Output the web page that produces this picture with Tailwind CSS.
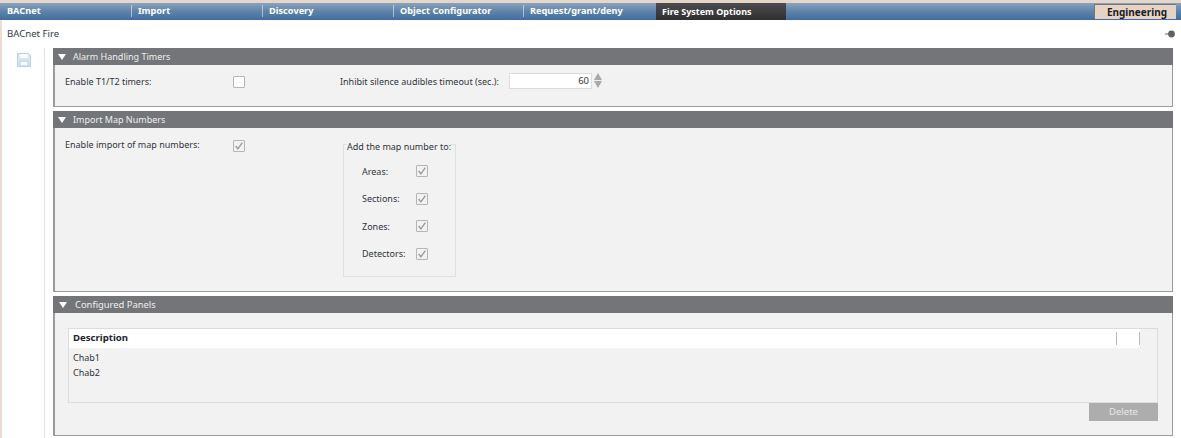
<!DOCTYPE html>
<html><head><meta charset="utf-8"><script src="https://cdn.jsdelivr.net/npm/@tailwindcss/browser@4"></script></head>
<body class="m-0 bg-white">
<div class="w-[1181px] h-[438px] overflow-hidden flex flex-col bg-white text-[9px] text-[#30353b] font-['Noto_Sans',sans-serif] leading-none">
  <div class="h-[3px] bg-[#e6d5c9] shrink-0"></div>
  <div class="h-[17px] shrink-0 flex bg-gradient-to-b from-[#88a3bf] via-[#5f83a8] to-[#3f6d9f] text-white font-bold text-[9.2px]">
    <div class="w-[132px] flex items-center justify-between pl-[7px] pb-[1px]"><span>BACnet</span><span class="w-[1px] h-[12px] bg-white/50"></span></div>
    <div class="w-[131px] flex items-center justify-between pl-[6px] pb-[1px]"><span>Import</span><span class="w-[1px] h-[12px] bg-white/50"></span></div>
    <div class="w-[131px] flex items-center justify-between pl-[6px] pb-[1px]"><span>Discovery</span><span class="w-[1px] h-[12px] bg-white/50"></span></div>
    <div class="w-[130px] flex items-center justify-between pl-[6px] pb-[1px]"><span>Object Configurator</span><span class="w-[1px] h-[12px] bg-white/50"></span></div>
    <div class="w-[132px] flex items-center pl-[6px] pb-[1px]">Request/grant/deny</div>
    <div class="w-[130px] flex items-center pl-[6px] pb-[1px] text-[9px] bg-gradient-to-b from-[#4d4d4f] to-[#2f2f31]">Fire System Options</div>
    <div class="flex-1"></div>
    <div class="w-[82px] mt-[1px] mb-[1px] mr-[5px] pl-[3px] flex items-center justify-center bg-[#e6d3c6] border-l border-t border-[#777] text-[#1c1c1c] text-[10px]">Engineering</div>
  </div>
  <div class="h-[28px] shrink-0 flex items-start justify-between pl-[5px] pr-[4px] pt-[9px] border-l-2 border-[#ecdcd2]">
    <span class="text-[#2f3a46] text-[9.6px]">BACnet Fire</span>
    <svg width="12" height="10" viewBox="0 0 12 10"><path d="M0 5h5" stroke="#666" stroke-width="1"/><circle cx="6.5" cy="5" r="3.4" fill="#5f6264"/></svg>
  </div>
  <div class="flex-1 flex min-h-0 border-l-2 border-[#ecdcd2]">
    <div class="w-[43px] shrink-0 border-r border-[#e4e4e4] pl-[15px] pt-[5px]">
      <svg width="14" height="14" viewBox="0 0 14 14" fill="none"><path d="M0.5 0.5h11l2 2v11h-13z" fill="#d8e6ee" stroke="#b9d0de"/><rect x="3" y="1" width="8" height="4" fill="#fff"/><rect x="3" y="8" width="8" height="5" fill="#f5f9fb" stroke="#b9d0de"/></svg>
    </div>
    <div class="w-[1120px] ml-[8px] flex flex-col gap-[4px]">

      <section class="h-[59px] flex flex-col">
        <div class="h-[17px] bg-[#737578] text-[#eeeeee] flex items-center pl-[5px] gap-[7px] shrink-0"><span class="w-0 h-0 border-x-[4px] border-x-transparent border-t-[6px] border-t-white"></span><span>Alarm Handling Timers</span></div>
        <div class="flex-1 bg-[#f2f2f2] border border-l-2 border-t-0 border-[#9a9a9a] flex items-start pl-[10px] pt-[11px]">
          <span class="w-[168px] mt-[1px]">Enable T1/T2 timers:</span>
          <span class="w-[12px] h-[12px] bg-white border border-[#b5b5b5] rounded-[1px] mr-[95px]"></span>
          <span class="w-[169px] mt-[1px] whitespace-nowrap">Inhibit silence audibles timeout (sec.):</span>
          <div class="w-[83px] h-[16px] -mt-[3px] bg-white border border-[#dcdcdc] flex items-center justify-end pr-[2px] text-[9.5px]">60</div>
          <div class="ml-[2px] -mt-[3px] flex flex-col gap-[1px]"><span class="w-0 h-0 border-x-[4px] border-x-transparent border-b-[7px] border-b-[#a9a9a9]"></span><span class="w-0 h-0 border-x-[4px] border-x-transparent border-t-[7px] border-t-[#a9a9a9]"></span></div>
        </div>
      </section>

      <section class="h-[181px] flex flex-col">
        <div class="h-[17px] bg-[#737578] text-[#eeeeee] flex items-center pl-[5px] gap-[7px] shrink-0"><span class="w-0 h-0 border-x-[4px] border-x-transparent border-t-[6px] border-t-white"></span><span>Import Map Numbers</span></div>
        <div class="flex-1 bg-[#f2f2f2] border border-l-2 border-t-0 border-[#9a9a9a] flex items-start pl-[10px] pt-[12px]">
          <span class="w-[168px]">Enable import of map numbers:</span>
          <span class="w-[12px] h-[12px] bg-[#f2f2f2] border border-[#b5b5b5] rounded-[1px] flex items-center justify-center mr-[98px]"><svg width="10" height="10" viewBox="0 0 9 9" fill="none"><path d="M1.5 4.5l2 2.5 4-5.5" stroke="#9b9b9b" stroke-width="1.2"/></svg></span>
          <div class="relative w-[113px] h-[133px] mt-[4px] border border-[#e0e0e0] pl-[18px] pt-[19px] flex flex-col gap-[13.6px]">
            <span class="absolute -top-[3px] left-[3px] bg-[#f2f2f2] whitespace-nowrap">Add the map number to:</span>
            <div class="flex items-center h-[14px]"><span class="w-[54px]">Areas:</span><span class="w-[12px] h-[12px] border border-[#b5b5b5] rounded-[1px] flex items-center justify-center"><svg width="10" height="10" viewBox="0 0 9 9" fill="none"><path d="M1.5 4.5l2 2.5 4-5.5" stroke="#9b9b9b" stroke-width="1.2"/></svg></span></div>
            <div class="flex items-center h-[14px]"><span class="w-[54px]">Sections:</span><span class="w-[12px] h-[12px] border border-[#b5b5b5] rounded-[1px] flex items-center justify-center"><svg width="10" height="10" viewBox="0 0 9 9" fill="none"><path d="M1.5 4.5l2 2.5 4-5.5" stroke="#9b9b9b" stroke-width="1.2"/></svg></span></div>
            <div class="flex items-center h-[14px]"><span class="w-[54px]">Zones:</span><span class="w-[12px] h-[12px] border border-[#b5b5b5] rounded-[1px] flex items-center justify-center"><svg width="10" height="10" viewBox="0 0 9 9" fill="none"><path d="M1.5 4.5l2 2.5 4-5.5" stroke="#9b9b9b" stroke-width="1.2"/></svg></span></div>
            <div class="flex items-center h-[14px]"><span class="w-[54px]">Detectors:</span><span class="w-[12px] h-[12px] border border-[#b5b5b5] rounded-[1px] flex items-center justify-center"><svg width="10" height="10" viewBox="0 0 9 9" fill="none"><path d="M1.5 4.5l2 2.5 4-5.5" stroke="#9b9b9b" stroke-width="1.2"/></svg></span></div>
          </div>
        </div>
      </section>

      <section class="h-[140px] flex flex-col">
        <div class="h-[17px] bg-[#737578] text-[#eeeeee] flex items-center pl-[6px] gap-[8px] shrink-0"><span class="w-0 h-0 border-x-[4px] border-x-transparent border-t-[6px] border-t-white"></span><span class="text-[9.4px]">Configured Panels</span></div>
        <div class="flex-1 bg-[#f2f2f2] border border-l-2 border-t-0 border-[#9a9a9a] pl-[13px] pr-[14px] pt-[15px]">
          <div class="h-[75px] border border-[#dcdcdc] flex flex-col">
            <div class="h-[19px] shrink-0 bg-white flex items-center mr-[17px] pl-[4px] pb-[1px]">
              <span class="font-bold text-[#1d2530] text-[9.6px]">Description</span>
              <span class="ml-auto w-[1px] h-[13px] bg-[#bbb] mr-[22px]"></span><span class="w-[1px] h-[13px] bg-[#bbb]"></span>
            </div>
            <div class="pl-[4px] pt-[5px] flex flex-col gap-[6px]"><span>Chab1</span><span>Chab2</span></div>
          </div>
          <div class="flex justify-end"><div class="w-[69px] h-[18px] bg-[#adadad] text-[#e8e8e8] flex items-center justify-center text-[9.5px]">Delete</div></div>
        </div>
      </section>

    </div>
  </div>
</div>
</body></html>
